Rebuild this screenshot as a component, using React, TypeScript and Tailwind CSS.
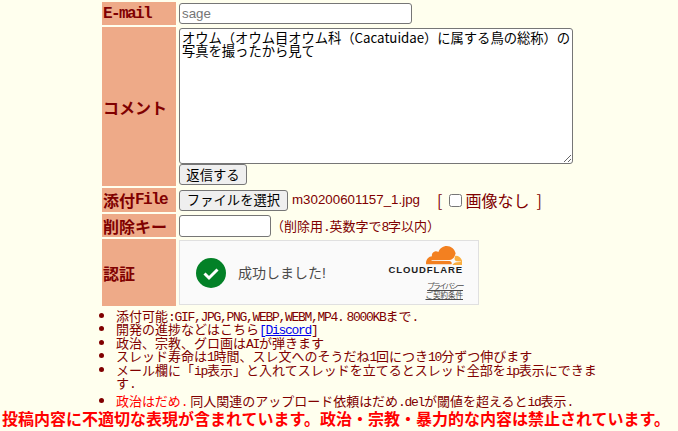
const jp = "font-['Noto_Sans_CJK_JP',sans-serif]";

// half-width latin: mono squeezed so it takes half of a CJK cell
const Half = ({ children }: { children: React.ReactNode }) => (
  <span className="font-['Liberation_Mono',monospace] leading-[0] tracking-[-0.1em]">{children}</span>
);

const Label = ({ children }: { children: React.ReactNode }) => (
  <div className="flex items-center bg-[#eeaa88] pl-px text-[16px] leading-[18px] font-bold text-[#800000]">
    {children}
  </div>
);

const CloudLogo = () => (
  <svg width="36" height="19" viewBox="0 0 36 19" className="mr-px">
    <path
      d="M25.6 18.6c.3-1 .2-1.9-.3-2.5-.5-.6-1.2-.9-2.1-1L5.8 14.9c-.1 0-.2-.1-.3-.1-.1-.1-.1-.2 0-.3.1-.2.2-.3.4-.3l17.6-.2c2.1-.1 4.3-1.8 5.1-3.8l1-2.6c0-.1.1-.2 0-.3C28.5 3 25 0 20.8 0c-3.9 0-7.2 2.5-8.4 6-.8-.6-1.8-.9-2.9-.8-1.9.2-3.4 1.7-3.6 3.6-.1.5 0 1 .1 1.4C2.9 10.3 0 13.3 0 17c0 .3 0 .7.1 1 0 .2.2.3.3.3h24.6c.2 0 .4-.1.5-.3l.1-.4z"
      fill="#f38020"
    />
    <path
      d="M29.8 9.7h-.4c-.1 0-.2.1-.2.2l-.5 1.8c-.3 1-.2 1.9.3 2.5.5.6 1.2.9 2.1 1l3.5.2c.1 0 .2.1.3.1.1.1.1.2 0 .3-.1.2-.2.3-.4.3l-3.7.2c-2.1.1-4.3 1.8-5.1 3.8l-.2.5c0 .1 0 .3.2.3h10.4c.1 0 .3-.1.3-.2.2-.8.3-1.6.3-2.4 0-4.7-2.9-8.6-6.9-8.6z"
      fill="#faae40"
    />
  </svg>
);

export default function App() {
  return (
    <div className={`h-[431px] overflow-hidden bg-[#ffffee] pt-[2px] text-[#800000] [text-spacing-trim:space-all] ${jp}`}>
      <div className="ml-[102px] grid w-[480px] grid-cols-[74px_1fr] gap-x-[3px] gap-y-[2px]">
        <Label>
          <span className="font-['Liberation_Mono',monospace] tracking-[-0.1em]">E-mail</span>
        </Label>
        <div className="flex h-[23px] items-center">
          <input
            placeholder="sage"
            className="h-[21px] w-[233px] rounded-[3px] border border-[#767676] bg-white px-[2px] font-['Liberation_Sans',sans-serif] text-[13.33px] outline-none placeholder:text-[#757575]"
          />
        </div>

        <Label>コメント</Label>
        <div className="flex h-[159px] flex-col items-start">
          <textarea
            readOnly
            defaultValue={
              "オウム\uFF08オウム目オウム科\uFF08Cacatuidae\uFF09に属する鳥の総称\uFF09の\n写真を撮ったから見て"
            }
            className="mt-px h-[136px] w-[394px] rounded-[3px] border border-[#767676] bg-white py-[2px] pl-[2px] text-[13.33px] leading-[13px] tracking-[-0.05px] text-black outline-none [text-spacing-trim:space-all]"
          />
          <button className="flex h-[21px] w-[68px] items-center justify-center rounded-[3px] border border-[#767676] bg-[#efefef] text-[13.33px] text-black">
            返信する
          </button>
        </div>

        <Label>
          添付<span className="font-['Liberation_Mono',monospace] tracking-[-0.1em]">File</span>
        </Label>
        <div className="flex h-[24px] items-center whitespace-nowrap">
          <button className="flex h-[21px] w-[109px] items-center justify-center rounded-[3px] border border-[#767676] bg-[#efefef] text-[13.33px] text-black">
            ファイルを選択
          </button>
          <span className="ml-[4px] font-['Liberation_Sans',sans-serif] text-[13.33px]">m30200601157_1.jpg</span>
          <span className="ml-[17px] flex items-center text-[16px]">
            [
            <input type="checkbox" className="mr-[3px] ml-[7px] h-[13px] w-[13px]" />
            画像なし
            <span className="ml-[7px]">]</span>
          </span>
        </div>

        <Label>削除キー</Label>
        <div className="flex h-[23px] items-center whitespace-nowrap">
          <input className="h-[22px] w-[92px] rounded-[3px] border border-[#767676] bg-white outline-none" />
          <span className="text-[13px]">
            {"\uFF08"}削除用<Half>.</Half>英数字で<Half>8</Half>字以内{"\uFF09"}
          </span>
        </div>

        <Label>認証</Label>
        <div className="h-[67px] pt-px">
          <div className="flex h-[65px] w-[300px] items-center border border-[#e0e0e0] bg-[#fafafa] pl-[16px]">
            <svg width="30" height="30" viewBox="0 0 30 30">
              <circle cx="15" cy="15" r="15" fill="#038127" />
              <path d="M8.5 15.5l4.5 4.5 8.5-8.5" fill="none" stroke="#fff" strokeWidth="3" />
            </svg>
            <span className="ml-[12px] text-[14px] text-[#4a4a4a]">
              成功しました<span className="font-['Liberation_Sans',sans-serif]">!</span>
            </span>
            <div className="mr-[15px] ml-auto flex flex-col items-end">
              <CloudLogo />
              <span className="font-['Liberation_Sans',sans-serif] text-[9.5px] leading-[10px] font-bold tracking-[0.9px] text-[#1d1d1d]">
                CLOUDFLARE
              </span>
              <span className="mt-[6px] text-[7.5px] leading-[9px] tracking-[-1.5px] text-[#4a4a4a] underline">
                プライバシー
              </span>
              <span className="text-[7.5px] leading-[10px] text-[#4a4a4a] underline">ご契約条件</span>
            </div>
          </div>
        </div>
      </div>

      <ul className="mt-[3px] ml-[102px] w-[496px] list-disc pl-[14px] text-[13px] leading-[13.4px] marker:text-[#800000]">
        <li>
          添付可能<Half>:GIF,JPG,PNG,WEBP,WEBM,MP4.</Half> <Half>8000KB</Half>まで<Half>.</Half>
        </li>
        <li>
          開発の進捗などはこちら
          <a className="text-[#0000ee]">
            <Half>[</Half>
            <span className="underline"><Half>Discord</Half></span>
          </a>
          <Half>]</Half>
        </li>
        <li>
          政治{"\u3001"}宗教{"\u3001"}グロ画は<Half>AI</Half>が弾きます
        </li>
        <li>
          スレッド寿命は<Half>1</Half>時間{"\u3001"}スレ文へのそうだね<Half>1</Half>回につき<Half>10</Half>分ずつ伸びます
        </li>
        <li>
          メール欄に{"\u300C"}<Half>ip</Half>表示{"\u300D"}と入れてスレッドを立てるとスレッド全部を<Half>ip</Half>表示にできます<Half>.</Half>
        </li>
        <li className="mt-[5px]">
          <span className="text-[#ff0000]">政治はだめ<Half>.</Half></span> 同人関連のアップロード依頼はだめ<Half>.del</Half>が閾値を超えると<Half>id</Half>表示<Half>.</Half>
        </li>
      </ul>

      <p className="mt-px pl-[2px] text-[16px] leading-[18px] font-bold whitespace-nowrap text-[#ff0000]">
        投稿内容に不適切な表現が含まれています{"\u3002"}政治{"\u30FB"}宗教{"\u30FB"}暴力的な内容は禁止されています{"\u3002"}
      </p>
    </div>
  );
}
